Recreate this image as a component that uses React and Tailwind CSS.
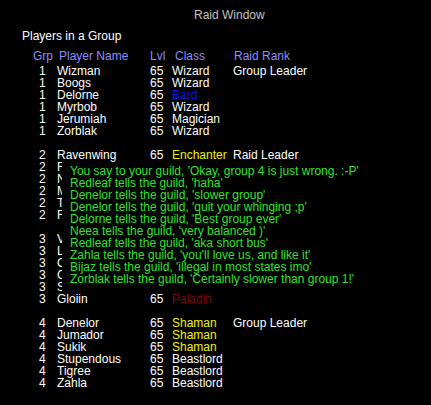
import React from 'react';

// rows marked hidden sit under the guild chat window: only the first sliver of the name shows
const groups = [
  [
    ['Wizman', 'Wizard', 'text-white', 'Group Leader'],
    ['Boogs', 'Wizard', 'text-white'],
    ['Delorne', 'Bard', 'text-[#1010f0]'],
    ['Myrbob', 'Wizard', 'text-white'],
    ['Jerumiah', 'Magician', 'text-white'],
    ['Zorblak', 'Wizard', 'text-white'],
  ],
  [
    ['Ravenwing', 'Enchanter', 'text-[#f0f000]', 'Raid Leader'],
    ['Redleaf', 'Druid', 'text-white', null, true],
    ['Neea', 'Cleric', 'text-white', null, true],
    ['Mystik', 'Wizard', 'text-white', null, true],
    ['Tharsis', 'Warrior', 'text-white', null, true],
    ['Rellik', 'Rogue', 'text-white', null, true],
  ],
  [
    ['Valorin', 'Warrior', 'text-white', null, true],
    ['Lunarra', 'Cleric', 'text-white', null, true],
    ['Carnage', 'Warrior', 'text-white', null, true],
    ['Cinders', 'Wizard', 'text-white', null, true],
    ['Sable', 'Rogue', 'text-white', null, true],
    ['Gloiin', 'Paladin', 'text-[#7c0c0c]'],
  ],
  [
    ['Denelor', 'Shaman', 'text-[#f0f000]', 'Group Leader'],
    ['Jumador', 'Shaman', 'text-[#f0f000]'],
    ['Sukik', 'Shaman', 'text-[#f0f000]'],
    ['Stupendous', 'Beastlord', 'text-white'],
    ['Tigree', 'Beastlord', 'text-white'],
    ['Zahla', 'Beastlord', 'text-white'],
  ],
];

const chat = [
  "You say to your guild, 'Okay, group 4 is just wrong. :-P'",
  "Redleaf tells the guild, 'haha'",
  "Denelor tells the guild, 'slower group'",
  "Denelor tells the guild, 'quit your whinging ;p'",
  "Delorne tells the guild, 'Best group ever'",
  "Neea tells the guild, 'very balanced )'",
  "Redleaf tells the guild, 'aka short bus'",
  "Zahla tells the guild, 'you'll love us, and like it'",
  "Bijaz tells the guild, 'illegal in most states imo'",
  "Zorblak tells the guild, 'Certainly slower than group 1!'",
];

export default function App() {
  return (
    <div className="relative w-[431px] h-[405px] bg-black text-white text-[12px] leading-[12px] font-['Liberation_Sans',Arial,sans-serif] overflow-hidden">
      <div className="pt-[9px] pl-[194px] text-[#c0c0c0]">Raid Window</div>
      <div className="mt-[9px] pl-[22px]">Players in a Group</div>

      {/* column headers */}
      <div className="mt-[8px] flex pl-[33px] text-[#8c8cff]">
        <span className="w-[26px]">Grp</span>
        <span className="w-[91px]">Player Name</span>
        <span className="w-[25px]">Lvl</span>
        <span className="w-[59px]">Class</span>
        <span>Raid Rank</span>
      </div>

      <div className="mt-[3px] flex flex-col gap-[12px]">
        {groups.map((rows, gi) => (
          <div key={gi} className="flex flex-col">
            {rows.map(([name, cls, color, rank, hidden]) => (
              <div key={name} className="flex h-[12px] pl-[39px] whitespace-nowrap">
                <span className="w-[18px]">{gi + 1}</span>
                {hidden ? (
                  <span className="w-[5px] overflow-hidden">{name}</span>
                ) : (
                  <>
                    <span className="w-[93px]">{name}</span>
                    <span className="w-[22px]">65</span>
                    <span className={`w-[61px] ${color}`}>{cls}</span>
                    <span>{rank}</span>
                  </>
                )}
              </div>
            ))}
          </div>
        ))}
      </div>

      {/* guild chat window */}
      <div className="absolute left-[62px] top-[162px] right-0 h-[131px] bg-black pt-[2.5px] pl-[8px] text-[#30e030] whitespace-nowrap">
        {chat.map((line, i) => (
          <div key={i} className="h-[12px]">{line}</div>
        ))}
      </div>
    </div>
  );
}
